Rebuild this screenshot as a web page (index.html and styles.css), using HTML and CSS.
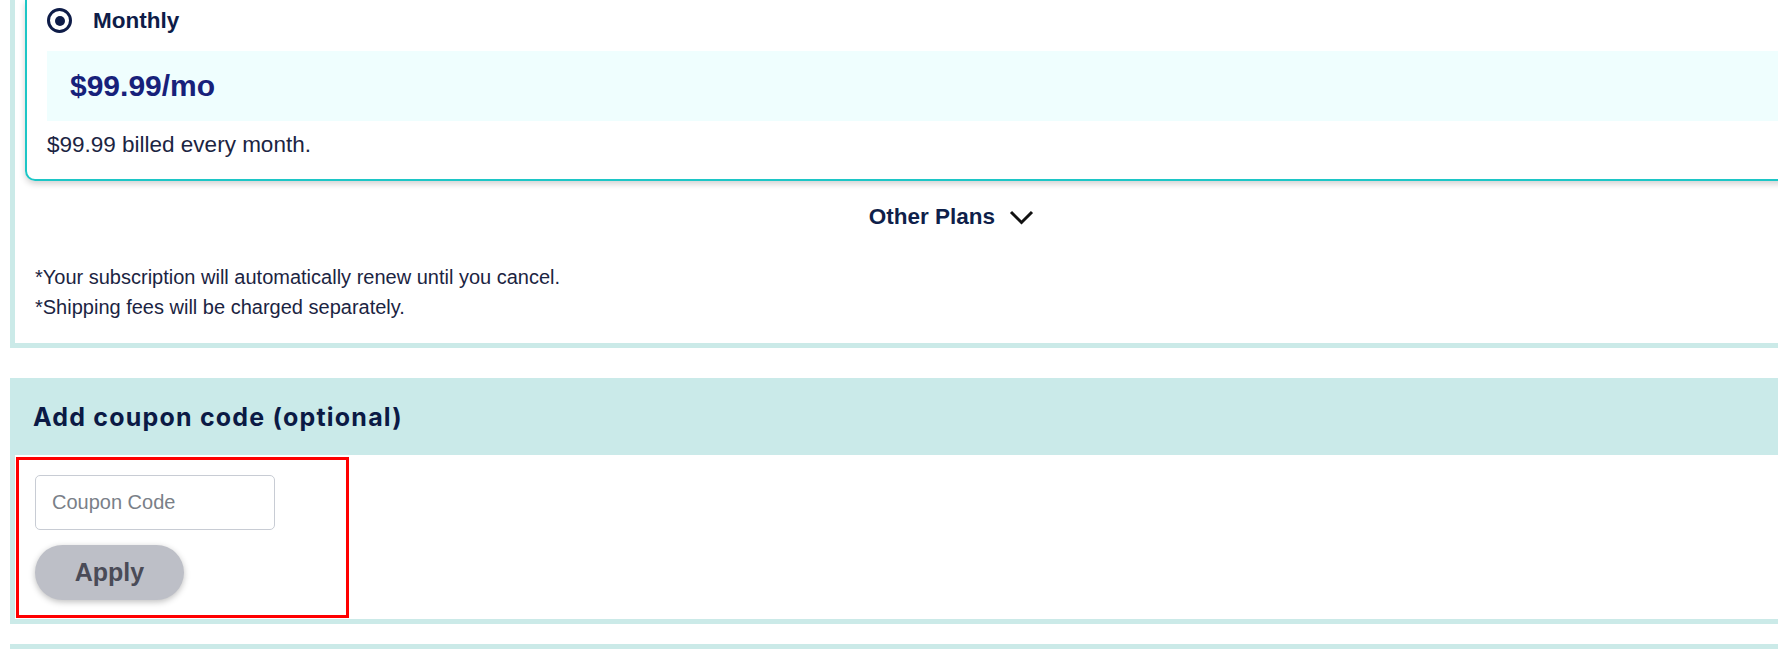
FILE: index.html
```html
<!DOCTYPE html>
<html lang="en">
<head>
  <meta charset="UTF-8" />
  <meta name="viewport" content="width=device-width, initial-scale=1.0"/>
  <title>Checkout - Subscription</title>
  <link rel="stylesheet" href="styles.css">
</head>
<body>
  <div class="page">
    <section class="plans">
      <div class="plan-card">
        <label class="plan-option">
          <span class="radio"><span class="radio-dot"></span></span>
          <span class="plan-name">Monthly</span>
        </label>
        <div class="plan-price">$99.99/mo</div>
        <p class="plan-note">$99.99 billed every month.</p>
      </div>

      <div class="other-plans">
        <span>Other Plans</span>
        <svg width="25" height="15" viewBox="0 0 25 15">
          <polyline points="2,2 12.5,12.5 23,2" fill="none" stroke="#111" stroke-width="3"/>
        </svg>
      </div>

      <div class="terms">
        <p>*Your subscription will automatically renew until you cancel.</p>
        <p>*Shipping fees will be charged separately.</p>
      </div>
    </section>

    <section class="coupon">
      <h2 class="coupon-title">Add coupon code (optional)</h2>
      <div class="coupon-body">
        <div class="coupon-form">
          <input type="text" id="coupon" placeholder="Coupon Code">
          <button class="apply-btn">Apply</button>
        </div>
      </div>
    </section>

    <section class="next-section"></section>
  </div>
</body>
</html>
```

FILE: styles.css
```css
body {
  margin: 0;
  font-family: "Liberation Sans", Arial, sans-serif;
  color: #1b2442;
  background: #fff;
  overflow: hidden;
}
.page {
  width: 1878px;
  padding-left: 10px;
}
.plans {
  border-left: 5px solid #cbeae8;
  border-bottom: 5px solid #cbeae8;
  padding: 0 10px 21px 10px;
}
.plan-card {
  border: 2px solid #1cc6c6;
  border-top: 0;
  border-radius: 0 0 10px 10px;
  padding: 8px 20px 21px;
  box-shadow: 0 3px 6px rgba(0,0,0,0.18);
}
.plan-option {
  display: flex;
  align-items: center;
  gap: 21px;
  height: 25px;
}
.radio {
  width: 25px;
  height: 25px;
  box-sizing: border-box;
  border: 3px solid #0e1c48;
  border-radius: 50%;
  display: flex;
  align-items: center;
  justify-content: center;
}
.radio-dot {
  width: 10px;
  height: 10px;
  border-radius: 50%;
  background: #0e1c48;
}
.plan-name {
  font-size: 22.5px;
  font-weight: 700;
  color: #0e1c48;
}
.plan-price {
  margin-top: 18px;
  height: 70px;
  padding-left: 23px;
  background: #effefe;
  display: flex;
  align-items: center;
  font-size: 30px;
  font-weight: 700;
  color: #17217a;
}
.plan-note {
  margin: 11px 0 0;
  font-size: 22.5px;
  line-height: 26px;
}
.other-plans {
  display: flex;
  justify-content: center;
  align-items: center;
  gap: 14px;
  padding-top: 23px;
  font-size: 22.5px;
  line-height: 26px;
  font-weight: 700;
  color: #0f1f4a;
}
.terms {
  margin-top: 32px;
  padding-left: 10px;
  font-size: 20px;
  line-height: 30px;
}
.terms p {
  margin: 0;
}
.coupon {
  margin-top: 30px;
}
.coupon-title {
  margin: 0;
  height: 77px;
  padding-left: 23px;
  background: #caeae9;
  display: flex;
  align-items: center;
  font-family: Inter, "Liberation Sans", sans-serif;
  font-size: 25px;
  font-weight: 700;
  letter-spacing: 1.2px;
  color: #0b1a45;
}
.coupon-body {
  border-left: 5px solid #cbeae8;
  border-bottom: 5px solid #cbeae8;
  padding: 2px 0 1px 1px;
}
.coupon-form {
  width: 333px;
  box-sizing: border-box;
  border: 3px solid #ff0000;
  padding: 15px 0 15px 16px;
}
.coupon-form input {
  display: block;
  width: 240px;
  height: 55px;
  box-sizing: border-box;
  padding: 0 16px;
  border: 1px solid #c8ccd4;
  border-radius: 5px;
  font-family: "Liberation Sans", Arial, sans-serif;
  font-size: 20px;
  color: #333;
}
.coupon-form input::placeholder {
  color: #7a7f88;
}
.apply-btn {
  display: block;
  margin-top: 15px;
  width: 149px;
  height: 55px;
  border: none;
  border-radius: 28px;
  background: #bdbfc7;
  color: #4a4b57;
  font-family: "Liberation Sans", Arial, sans-serif;
  font-size: 25px;
  font-weight: 700;
  box-shadow: 0 2px 6px rgba(0,0,0,0.25);
  cursor: pointer;
}
.next-section {
  margin-top: 20px;
  height: 40px;
  border-top: 5px solid #cbeae8;
}
```
